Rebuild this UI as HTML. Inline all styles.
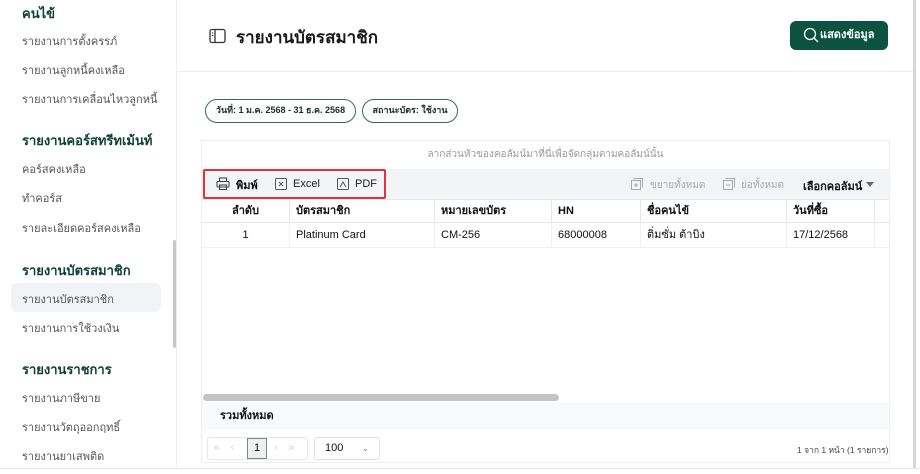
<!DOCTYPE html>
<html><head><meta charset="utf-8"><style>
*{box-sizing:border-box;margin:0;padding:0}
body{width:920px;height:474px;overflow:hidden;background:#fff;font-family:"Liberation Sans","Noto Sans CJK SC",sans-serif;position:relative;color:#111}
.abs{position:absolute}
.sb{position:absolute;left:0;top:0;width:177px;height:468px;border-right:1px solid #eceef0;background:#fff}
.h{position:absolute;left:22px;font-size:13px;font-weight:bold;color:#0e3f33}
.it{position:absolute;left:22px;font-size:11px;color:#555}
.chip{position:absolute;top:99px;height:24px;border:1.5px solid #2f6e5c;border-radius:12px;font-size:9px;font-weight:bold;line-height:21px;text-align:center;color:#1a2e28}
.th{position:absolute;top:199px;height:23px;font-size:11px;font-weight:bold;line-height:25px;border-right:1px solid #e5e7eb;padding-left:6px}
.td{position:absolute;top:222px;height:26px;font-size:11px;line-height:27px;border-right:1px solid #eef0f2;padding-left:6px}
</style></head><body>
<div class="sb">
<div class="h" style="top:3px">คนไข้</div>
<div class="it" style="top:32px">รายงานการตั้งครรภ์</div>
<div class="it" style="top:61px">รายงานลูกหนี้คงเหลือ</div>
<div class="it" style="top:90px">รายงานการเคลื่อนไหวลูกหนี้</div>
<div class="h" style="top:130px">รายงานคอร์สทรีทเม้นท์</div>
<div class="it" style="top:160px">คอร์สคงเหลือ</div>
<div class="it" style="top:189px">ทำคอร์ส</div>
<div class="it" style="top:219px">รายละเอียดคอร์สคงเหลือ</div>
<div class="h" style="top:260px">รายงานบัตรสมาชิก</div>
<div class="abs" style="left:11px;top:283px;width:150px;height:29px;background:#f1f3f6;border-radius:6px"></div>
<div class="it" style="top:290px">รายงานบัตรสมาชิก</div>
<div class="it" style="top:319px">รายงานการใช้วงเงิน</div>
<div class="h" style="top:359px">รายงานราชการ</div>
<div class="it" style="top:389px">รายงานภาษีขาย</div>
<div class="it" style="top:418px">รายงานวัตถุออกฤทธิ์</div>
<div class="it" style="top:447px">รายงานยาเสพติด</div>
<div class="abs" style="left:173px;top:240px;width:3px;height:108px;background:#c8c8c8;border-radius:2px"></div>
</div>
<div class="abs" style="left:0;top:468px;width:920px;height:6px;border-top:1px solid #e5e7eb;background:#fff"></div>
<div class="abs" style="left:913px;top:0;width:3px;height:468px;background:#d6d6d6"></div>
<!-- header -->
<svg class="abs" style="left:209px;top:28px" width="17" height="17" viewBox="0 0 17 17"><rect x="1" y="1.5" width="15" height="13" rx="2" fill="none" stroke="#333" stroke-width="1.3"/><line x1="6" y1="1.5" x2="6" y2="14.5" stroke="#333" stroke-width="1.3"/><line x1="2.8" y1="5" x2="4.3" y2="5" stroke="#333"/><line x1="2.8" y1="7.5" x2="4.3" y2="7.5" stroke="#333"/></svg>
<div class="abs" style="left:236px;top:24px;font-size:17px;font-weight:bold;color:#1a1a1a">รายงานบัตรสมาชิก</div>
<div class="abs" style="left:790px;top:21px;width:98px;height:29px;background:#0b5240;border-radius:6px;color:#fff;font-size:11px;font-weight:bold;line-height:29px;padding-left:30px">แสดงข้อมูล</div>
<svg class="abs" style="left:803px;top:27px" width="16" height="16" viewBox="0 0 16 16"><circle cx="7" cy="7" r="5.5" fill="none" stroke="#fff" stroke-width="1.3"/><line x1="11" y1="11" x2="15" y2="15" stroke="#fff" stroke-width="1.3"/></svg>
<div class="abs" style="left:177px;top:71px;width:736px;height:1px;background:#eceef0"></div>
<div class="chip" style="left:205px;width:151px">วันที่: 1 ม.ค. 2568 - 31 ธ.ค. 2568</div>
<div class="chip" style="left:362px;width:96px">สถานะบัตร: ใช้งาน</div>
<!-- grid -->
<div class="abs" style="left:201px;top:140px;width:689px;height:323px;border:1px solid #eceef0"></div>
<div class="abs" style="left:202px;top:141px;width:687px;height:28px;font-size:10px;color:#999;text-align:center;line-height:28px">ลากส่วนหัวของคอลัมน์มาที่นี่เพื่อจัดกลุ่มตามคอลัมน์นั้น</div>
<div class="abs" style="left:202px;top:169px;width:687px;height:30px;background:#f3f4f6"></div>
<div class="abs" style="left:203px;top:169px;width:183px;height:30px;border:2px solid #e0323c;border-radius:2px"></div>
<svg class="abs" style="left:216px;top:177px" width="14" height="14" viewBox="0 0 14 14" fill="none" stroke="#444" stroke-width="1.1"><rect x="3.5" y="1" width="7" height="3.5"/><rect x="1" y="4.5" width="12" height="5.5" rx="1"/><rect x="3.5" y="8" width="7" height="4.5"/></svg>
<div class="abs" style="left:236px;top:176px;font-size:11px;font-weight:bold">พิมพ์</div>
<svg class="abs" style="left:275px;top:178px" width="12" height="12" viewBox="0 0 12 12" fill="none" stroke="#555"><rect x=".5" y=".5" width="11" height="11" rx="1"/><path d="M4 4l4 4M8 4l-4 4"/></svg>
<div class="abs" style="left:293px;top:178px;font-size:11px;color:#222">Excel</div>
<svg class="abs" style="left:337px;top:178px" width="12" height="12" viewBox="0 0 12 12" fill="none" stroke="#555"><rect x=".5" y=".5" width="11" height="11" rx="1"/><path d="M3 9l3-5 3 5"/></svg>
<div class="abs" style="left:355px;top:178px;font-size:11px;color:#222">PDF</div>
<svg class="abs" style="left:631px;top:178px" width="12" height="12" viewBox="0 0 12 12" fill="none" stroke="#aaa"><rect x=".5" y="2.5" width="9" height="9"/><path d="M2.5 .5h9v9M5 5v4M3 7h4"/></svg>
<div class="abs" style="left:650px;top:178px;font-size:10px;color:#aaa">ขยายทั้งหมด</div>
<svg class="abs" style="left:723px;top:178px" width="12" height="12" viewBox="0 0 12 12" fill="none" stroke="#aaa"><rect x=".5" y="2.5" width="9" height="9"/><path d="M2.5 .5h9v9M3 7h4"/></svg>
<div class="abs" style="left:741px;top:178px;font-size:10px;color:#aaa">ย่อทั้งหมด</div>
<div class="abs" style="left:803px;top:177px;font-size:11px;font-weight:bold">เลือกคอลัมน์</div>
<div class="abs" style="left:866px;top:182px;width:0;height:0;border-left:4px solid transparent;border-right:4px solid transparent;border-top:5px solid #666"></div>
<div class="abs" style="left:202px;top:199px;width:687px;height:1px;background:#e5e7eb"></div>
<div class="th" style="left:202px;width:88px;text-align:center;padding:0">ลำดับ</div>
<div class="th" style="left:290px;width:145px">บัตรสมาชิก</div>
<div class="th" style="left:435px;width:117px">หมายเลขบัตร</div>
<div class="th" style="left:552px;width:89px">HN</div>
<div class="th" style="left:641px;width:146px">ชื่อคนไข้</div>
<div class="th" style="left:787px;width:88px">วันที่ซื้อ</div>
<div class="abs" style="left:202px;top:222px;width:687px;height:1px;background:#e5e7eb"></div>
<div class="td" style="left:202px;width:88px;text-align:center;padding:0">1</div>
<div class="td" style="left:290px;width:145px">Platinum Card</div>
<div class="td" style="left:435px;width:117px">CM-256</div>
<div class="td" style="left:552px;width:89px">68000008</div>
<div class="td" style="left:641px;width:146px">ติ่มซั่ม ต้าบิง</div>
<div class="td" style="left:787px;width:88px">17/12/2568</div>
<div class="abs" style="left:202px;top:247px;width:687px;height:1px;background:#eef0f2"></div>
<div class="abs" style="left:203px;top:394px;width:356px;height:7px;background:#c4c4c4;border-radius:4px"></div>
<div class="abs" style="left:202px;top:403px;width:687px;height:26px;background:#f9fafb;font-size:11px;font-weight:bold;line-height:26px;padding-left:18px">รวมทั้งหมด</div>
<div class="abs" style="left:207px;top:437px;width:101px;height:23px;border:1px solid #e5e7eb;border-radius:3px"></div>
<div class="abs" style="left:214px;top:442px;font-size:10px;color:#ccc">«&nbsp;&nbsp;&nbsp;&nbsp;‹</div>
<div class="abs" style="left:247px;top:438px;width:20px;height:21px;border:1.5px solid #6b8f86;background:#f0f0f0;font-size:11px;text-align:center;line-height:19px">1</div>
<div class="abs" style="left:274px;top:442px;font-size:10px;color:#ccc">›&nbsp;&nbsp;&nbsp;&nbsp;»</div>
<div class="abs" style="left:314px;top:437px;width:66px;height:23px;border:1px solid #e0e0e0;border-radius:3px;font-size:11px;line-height:21px;padding-left:10px">100<span style="position:absolute;left:47px;font-size:8px;color:#777">⌄</span></div>
<div class="abs" style="left:797px;top:443px;font-size:8.5px;color:#444;white-space:nowrap">1 จาก 1 หน้า (1 รายการ)</div>
</body></html>
